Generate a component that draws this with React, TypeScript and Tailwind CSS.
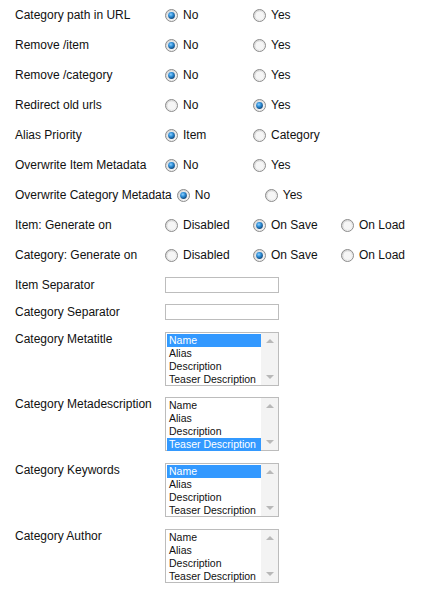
import React from "react";

type RadioRow = {
  label: string;
  options: string[];
  checked: number;
};

const RADIO_ROWS: RadioRow[] = [
  { label: "Category path in URL", options: ["No", "Yes"], checked: 0 },
  { label: "Remove /item", options: ["No", "Yes"], checked: 0 },
  { label: "Remove /category", options: ["No", "Yes"], checked: 0 },
  { label: "Redirect old urls", options: ["No", "Yes"], checked: 1 },
  { label: "Alias Priority", options: ["Item", "Category"], checked: 0 },
  { label: "Overwrite Item Metadata", options: ["No", "Yes"], checked: 0 },
  { label: "Overwrite Category Metadata", options: ["No", "Yes"], checked: 0 },
  { label: "Item: Generate on", options: ["Disabled", "On Save", "On Load"], checked: 1 },
  { label: "Category: Generate on", options: ["Disabled", "On Save", "On Load"], checked: 1 },
];

const LIST_ITEMS = ["Name", "Alias", "Description", "Teaser Description"];

const LIST_ROWS = [
  { label: "Category Metatitle", selected: 0, gap: "mt-[12px]" },
  { label: "Category Metadescription", selected: 3, gap: "mt-[11px]" },
  { label: "Category Keywords", selected: 0, gap: "mt-[12px]" },
  { label: "Category Author", selected: -1, gap: "mt-[12px]" },
];

// old windows style radio, drawn so it looks the same everywhere
const RadioDot = ({ checked }: { checked: boolean }) => (
  <svg width="13" height="13" viewBox="0 0 13 13" className="shrink-0">
    <defs>
      <linearGradient id="radioRing" x1="0" y1="0" x2="1" y2="1">
        <stop offset="0" stopColor="#cfcfcf" />
        <stop offset="1" stopColor="#fbfbfb" />
      </linearGradient>
      <radialGradient id="radioDot" cx="0.4" cy="0.35" r="0.7">
        <stop offset="0" stopColor="#8fd0ff" />
        <stop offset="0.45" stopColor="#2f8fd8" />
        <stop offset="1" stopColor="#0b3f72" />
      </radialGradient>
    </defs>
    <circle cx="6.5" cy="6.5" r="6" fill="url(#radioRing)" stroke="#8c8c8c" strokeWidth="1" />
    <circle cx="6.5" cy="6.5" r="4" fill="#f6f6f6" />
    {checked && <circle cx="6.5" cy="6.5" r="3.4" fill="url(#radioDot)" />}
  </svg>
);

const ListBox = ({ selected }: { selected: number }) => (
  <div className="flex w-[114px] h-[54px] border border-[#bcbcbc] bg-white">
    <div className="flex-1 flex flex-col pt-px pl-px text-[10.5px] leading-[13px] text-[#111]">
      {LIST_ITEMS.map((item, i) => (
        <div
          key={item}
          className={
            i === selected
              ? "h-[13px] pl-[2px] bg-[#3399ff] text-white whitespace-nowrap"
              : "h-[13px] pl-[2px] whitespace-nowrap"
          }
        >
          {item}
        </div>
      ))}
    </div>
    <div className="w-[17px] bg-[#f3f3f3] flex flex-col items-center justify-between py-[6px]">
      <div className="w-0 h-0 border-l-[4px] border-r-[4px] border-b-[4px] border-l-transparent border-r-transparent border-b-[#b8b8b8]" />
      <div className="w-0 h-0 border-l-[4px] border-r-[4px] border-t-[4px] border-l-transparent border-r-transparent border-t-[#b8b8b8]" />
    </div>
  </div>
);

export default function App() {
  return (
    <div className="w-[447px] h-[597px] bg-white pl-[15px] font-['Liberation_Sans',Arial,sans-serif] text-[12px] text-[#111]">
      {/* radio settings */}
      {RADIO_ROWS.map((row) => (
        <div key={row.label} className="flex items-center h-[30px]">
          <div className="min-w-[150px] pr-[5px] whitespace-nowrap">{row.label}</div>
          {row.options.map((opt, i) => (
            <label key={opt} className="w-[88px] flex items-center">
              <RadioDot checked={i === row.checked} />
              <span className="ml-[5px]">{opt}</span>
            </label>
          ))}
        </div>
      ))}

      {/* separators */}
      <div className="flex items-center h-[16px] leading-[14px] mt-[7px]">
        <div className="w-[150px]">Item Separator</div>
        <div className="w-[114px] h-[16px] border border-[#bdbdbd] bg-white" />
      </div>
      <div className="flex items-center h-[16px] leading-[14px] mt-[11px]">
        <div className="w-[150px]">Category Separator</div>
        <div className="w-[114px] h-[16px] border border-[#bdbdbd] bg-white" />
      </div>

      {/* metadata lists */}
      {LIST_ROWS.map((row) => (
        <div key={row.label} className={"flex items-start leading-[14px] " + row.gap}>
          <div className="w-[150px] whitespace-nowrap">{row.label}</div>
          <ListBox selected={row.selected} />
        </div>
      ))}
    </div>
  );
}
